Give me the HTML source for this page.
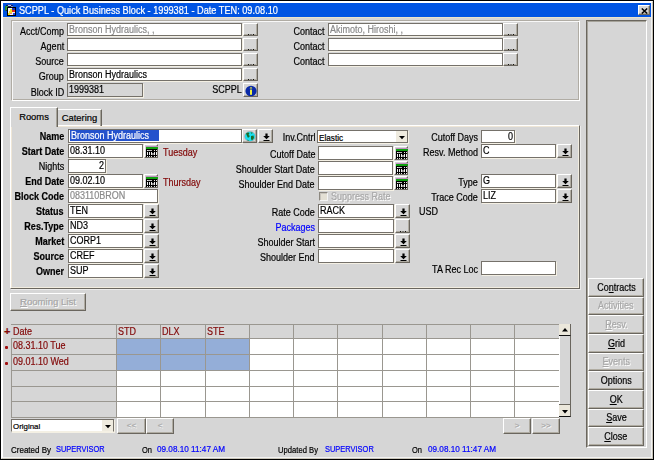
<!DOCTYPE html>
<html><head><meta charset="utf-8">
<style>
*{margin:0;padding:0;box-sizing:border-box}
html,body{width:654px;height:460px;overflow:hidden;background:#d6d6d6}
body{position:relative;font-family:"Liberation Sans",sans-serif;font-size:9px;color:#000;-webkit-text-stroke:0.2px}
.a{position:absolute}
.lbl{position:absolute;text-align:right;white-space:nowrap;line-height:13px;height:13px;padding-top:1px}
.lft{text-align:left}
.b{font-weight:bold}
.fld{position:absolute;background:#fff;border:1px solid #75716a;box-shadow:1px 1px 0 #f4f0e4;white-space:nowrap;overflow:hidden;line-height:12px;padding-left:1px;padding-top:0;font-size:9.3px}
.gr{color:#8a8a8a}
.btn{position:absolute;background:#d6d6d6;border-top:1px solid #fff;border-left:1px solid #fff;border-right:1px solid #6a665e;border-bottom:1px solid #6a665e;box-shadow:inset -1px -1px 0 #b0aca2}
.grp{position:absolute;border-top:1px solid #b0aca4;border-left:1px solid #b0aca4;border-right:1px solid #fff;border-bottom:1px solid #fff;box-shadow:inset 1px 1px 0 #f8f8f8, inset -1px -1px 0 #b0aca4}
.red{color:#820808}
.blue{color:#0000ff}
.tb{position:absolute;text-align:center;line-height:16px;white-space:nowrap}
.dis{color:#a8a8a8;text-shadow:1px 1px 0 #fff}
.sx{display:inline-block;transform-origin:0 0}
.t9{display:inline-block;font-size:10px;transform:scaleX(.9);transform-origin:100% 50%}
.lft .t9{transform-origin:0 50%}
.fld .t9{transform-origin:0 50%}
</style></head><body>
<div class="a" style="left:0;top:0;width:654px;height:460px;border:1px solid #000"></div>
<div class="a" style="left:1px;top:1px;width:652px;height:458px;border:1px solid #fff;border-right-color:#c8c4b8;border-bottom-color:#c8c4b8"></div>
<div class="a" style="left:2px;top:2px;width:650px;height:456px;border:1px solid #fff;border-right-color:#f2f2f2;border-bottom-color:#f2f2f2"></div>
<div class="a" style="left:3px;top:3px;width:648px;height:14px;background:#0054e3;color:#fff;font-size:10px;line-height:16px;padding-left:16px;white-space:nowrap;overflow:hidden"><span class="sx" style="transform:scaleX(0.917);transform-origin:0 50%">SCPPL - Quick Business Block - 1999381 - Date TEN: 09.08.10</span></div>
<div class="a" style="left:3px;top:17px;width:648px;height:1px;background:#ece4cc"></div>
<svg class="a" style="left:5px;top:4px" width="12" height="12" viewBox="0 0 12 12" shape-rendering="crispEdges">
<rect x="1" y="1" width="7" height="6" fill="#0c1c6c"/><rect x="2" y="0" width="5" height="1" fill="#3050b0"/><rect x="0" y="2" width="1" height="5" fill="#208030"/>
<rect x="1" y="2" width="2" height="4" fill="#30a040"/><rect x="3" y="1" width="3" height="1" fill="#c0d0f0"/><rect x="6" y="2" width="2" height="1" fill="#8090d0"/>
<rect x="2" y="3" width="9" height="9" fill="#000"/><rect x="3" y="4" width="7" height="7" fill="#f4f4f4"/>
<rect x="7" y="4" width="3" height="2" fill="#1830c0"/><rect x="7" y="6" width="3" height="2" fill="#e02828"/><rect x="8" y="9" width="2" height="2" fill="#2040e0"/>
<rect x="5" y="5" width="2" height="2" fill="#f0e020"/><rect x="4" y="7" width="3" height="2" fill="#f0e020"/><rect x="3" y="9" width="2" height="2" fill="#f0e020"/><rect x="5" y="9" width="2" height="1" fill="#e08080"/>
</svg>
<div class="btn " style="left:638px;top:5px;width:12px;height:10px;"><svg class="a" style="left:2px;top:1.5px" width="7" height="6" viewBox="0 0 7 6"><path d="M0.8 0.5L6.2 5.5M6.2 0.5L0.8 5.5" stroke="#000" stroke-width="1.5"/></svg></div>
<div class="grp" style="left:11px;top:20px;width:569px;height:81px"></div>
<div class="lbl " style="left:-56px;top:23px;width:120px;padding-top:1.5px"><span class="t9">Acct/Comp</span></div>
<div class="lbl " style="left:-56px;top:38px;width:120px;padding-top:1.5px"><span class="t9">Agent</span></div>
<div class="lbl " style="left:-56px;top:53px;width:120px;padding-top:1.5px"><span class="t9">Source</span></div>
<div class="lbl " style="left:-56px;top:68px;width:120px;padding-top:1.5px"><span class="t9">Group</span></div>
<div class="lbl " style="left:-56px;top:83px;width:120px;padding-top:2.5px"><span class="t9">Block ID</span></div>
<div class="fld gr" style="left:67px;top:23px;width:175px;height:13px;padding-top:0"><span class="t9">Bronson Hydraulics, ,</span></div>
<div class="fld " style="left:67px;top:38px;width:175px;height:13px;"></div>
<div class="fld " style="left:67px;top:53px;width:175px;height:13px;"></div>
<div class="fld " style="left:67px;top:68px;width:175px;height:13px;padding-top:0"><span class="t9">Bronson Hydraulics</span></div>
<div class="fld " style="left:67px;top:83px;width:76px;height:14px;background:#d6d6d6;padding-top:0"><span class="t9">1999381</span></div>
<div class="btn " style="left:243px;top:23px;width:15px;height:13px;"><svg class="a" style="left:3px;top:10px" width="8" height="2" shape-rendering="crispEdges"><rect x="1" y="0" width="1" height="1" fill="#111"/><rect x="3" y="0" width="2" height="1" fill="#777"/><rect x="6" y="0" width="1" height="1" fill="#111"/></svg></div>
<div class="btn " style="left:243px;top:38px;width:15px;height:13px;"><svg class="a" style="left:3px;top:10px" width="8" height="2" shape-rendering="crispEdges"><rect x="1" y="0" width="1" height="1" fill="#111"/><rect x="3" y="0" width="2" height="1" fill="#777"/><rect x="6" y="0" width="1" height="1" fill="#111"/></svg></div>
<div class="btn " style="left:243px;top:53px;width:15px;height:13px;"><svg class="a" style="left:3px;top:10px" width="8" height="2" shape-rendering="crispEdges"><rect x="1" y="0" width="1" height="1" fill="#111"/><rect x="3" y="0" width="2" height="1" fill="#777"/><rect x="6" y="0" width="1" height="1" fill="#111"/></svg></div>
<div class="btn " style="left:243px;top:68px;width:15px;height:13px;"><svg class="a" style="left:3px;top:10px" width="8" height="2" shape-rendering="crispEdges"><rect x="1" y="0" width="1" height="1" fill="#111"/><rect x="3" y="0" width="2" height="1" fill="#777"/><rect x="6" y="0" width="1" height="1" fill="#111"/></svg></div>
<div class="lbl " style="left:122px;top:82px;width:120px;padding-top:0.5px"><span class="t9">SCPPL</span></div>
<div class="btn " style="left:243px;top:83px;width:15px;height:14px;"><svg class="a" style="left:1px;top:1px" width="12" height="12" viewBox="0 0 12 12"><ellipse cx="6" cy="6" rx="5.6" ry="5.2" fill="#0a2aa8"/><rect x="5" y="4.6" width="2" height="5.2" fill="#f0f040"/><path d="M4.6 3.6 L6 1.8 L7.4 3.6Z" fill="#f0f040"/></svg></div>
<div class="lbl " style="left:204px;top:23px;width:120px;padding-top:1.5px"><span class="t9">Contact</span></div>
<div class="fld gr" style="left:328px;top:23px;width:175px;height:13px;padding-top:0"><span class="t9">Akimoto, Hiroshi, ,</span></div>
<div class="btn " style="left:503px;top:23px;width:15px;height:13px;"><svg class="a" style="left:3px;top:10px" width="8" height="2" shape-rendering="crispEdges"><rect x="1" y="0" width="1" height="1" fill="#111"/><rect x="3" y="0" width="2" height="1" fill="#777"/><rect x="6" y="0" width="1" height="1" fill="#111"/></svg></div>
<div class="lbl " style="left:204px;top:38px;width:120px;padding-top:1.5px"><span class="t9">Contact</span></div>
<div class="fld gr" style="left:328px;top:38px;width:175px;height:13px;padding-top:0"></div>
<div class="btn " style="left:503px;top:38px;width:15px;height:13px;"><svg class="a" style="left:3px;top:10px" width="8" height="2" shape-rendering="crispEdges"><rect x="1" y="0" width="1" height="1" fill="#111"/><rect x="3" y="0" width="2" height="1" fill="#777"/><rect x="6" y="0" width="1" height="1" fill="#111"/></svg></div>
<div class="lbl " style="left:204px;top:53px;width:120px;padding-top:1.5px"><span class="t9">Contact</span></div>
<div class="fld gr" style="left:328px;top:53px;width:175px;height:13px;padding-top:0"></div>
<div class="btn " style="left:503px;top:53px;width:15px;height:13px;"><svg class="a" style="left:3px;top:10px" width="8" height="2" shape-rendering="crispEdges"><rect x="1" y="0" width="1" height="1" fill="#111"/><rect x="3" y="0" width="2" height="1" fill="#777"/><rect x="6" y="0" width="1" height="1" fill="#111"/></svg></div>
<div class="a" style="left:10px;top:125px;width:570px;height:164px;border-top:1px solid #fff;border-left:1px solid #fff;border-right:1px solid #6a665e;border-bottom:1px solid #6a665e;box-shadow:inset -1px -1px 0 #f2ede0, inset 1px 1px 0 #efe6d6, 1px 1px 0 #ececec"></div>
<div class="a tb" style="left:57px;top:109px;width:45px;height:17px;border-top:1px solid #fff;border-left:1px solid #fff;border-right:1px solid #6a665e;box-shadow:inset -1px 0 0 #a6a39a;padding-top:0;font-size:9.4px">Catering</div>
<div class="a tb" style="left:10px;top:107px;width:48px;height:20px;background:#d6d6d6;border-top:1px solid #fff;border-left:1px solid #fff;border-right:1px solid #6a665e;box-shadow:inset -1px 0 0 #a6a39a;padding-top:1px;font-size:9.4px">Rooms</div>
<div class="lbl b" style="left:-56px;top:129px;width:120px;"><span class="t9">Name</span></div>
<div class="fld " style="left:68px;top:129px;width:174px;height:14px;padding-top:0"><span style="display:inline-block;background:#2452cc;color:#fff;padding:0 1px;height:11px;line-height:11px;vertical-align:top"><span class="t9">Bronson Hydraulics</span></span></div>
<div class="btn " style="left:242px;top:129px;width:15px;height:14px;"><svg class="a" style="left:1px;top:1px" width="12" height="11" viewBox="0 0 12 11"><ellipse cx="6" cy="5.5" rx="5.4" ry="5" fill="#18e0f0" stroke="#c89090" stroke-width="0.5"/><path d="M2 2.5 Q4 1 5.5 2 L4.5 4 L6 5 L4 7 L3 5 Z M6.5 1.5 L8.5 1.5 L8 3 Z M7 5 L9.5 4.5 L10 7 L8 9.5 L7 8 Z M3 8.5 L5 9.5 L4 10 Z" fill="#1a6a28"/></svg></div>
<div class="btn " style="left:258px;top:129px;width:15px;height:14px;"><svg class="a" style="left:4px;top:3px" width="7" height="8" viewBox="0 0 7 8"><path d="M2.4 0.5h2.2v2.5h2.2l-3.3 3.2-3.3-3.2h2.2z" fill="#000"/><rect x="0.5" y="7" width="6" height="1" fill="#000"/></svg></div>
<div class="lbl b" style="left:-56px;top:144px;width:120px;"><span class="t9">Start Date</span></div>
<div class="lbl " style="left:-56px;top:159px;width:120px;"><span class="t9">Nights</span></div>
<div class="lbl b" style="left:-56px;top:174px;width:120px;"><span class="t9">End Date</span></div>
<div class="lbl b" style="left:-56px;top:189px;width:120px;"><span class="t9">Block Code</span></div>
<div class="lbl b" style="left:-56px;top:204px;width:120px;"><span class="t9">Status</span></div>
<div class="lbl b" style="left:-56px;top:219px;width:120px;"><span class="t9">Res.Type</span></div>
<div class="lbl b" style="left:-56px;top:234px;width:120px;"><span class="t9">Market</span></div>
<div class="lbl b" style="left:-56px;top:249px;width:120px;"><span class="t9">Source</span></div>
<div class="lbl b" style="left:-56px;top:264px;width:120px;"><span class="t9">Owner</span></div>
<div class="fld " style="left:68px;top:144px;width:75px;height:14px;"><span class="t9">08.31.10</span></div>
<div class="btn " style="left:144px;top:144px;width:14px;height:14px;"><svg class="a" style="left:0px;top:1px" width="13" height="12" viewBox="0 0 13 12" shape-rendering="crispEdges"><rect x="1" y="0" width="12" height="1" fill="#c090c0"/><rect x="1" y="1" width="12" height="2" fill="#10a010"/><rect x="1" y="3" width="11" height="8" fill="#000"/><rect x="2" y="4" width="1" height="1" fill="#e8e8e8"/><rect x="2" y="6" width="1" height="3" fill="#f0f0f0"/><rect x="2" y="10" width="1" height="1" fill="#e8e8e8"/><rect x="4" y="4" width="1" height="1" fill="#e8e8e8"/><rect x="4" y="6" width="1" height="3" fill="#f0f0f0"/><rect x="4" y="10" width="1" height="1" fill="#e8e8e8"/><rect x="6" y="4" width="1" height="1" fill="#e8e8e8"/><rect x="6" y="6" width="1" height="3" fill="#f0f0f0"/><rect x="6" y="10" width="1" height="1" fill="#e8e8e8"/><rect x="9" y="4" width="1" height="1" fill="#e8e8e8"/><rect x="9" y="6" width="1" height="3" fill="#f0f0f0"/><rect x="9" y="10" width="1" height="1" fill="#e8e8e8"/><rect x="11" y="4" width="1" height="1" fill="#e8e8e8"/><rect x="11" y="6" width="1" height="3" fill="#f0f0f0"/><rect x="11" y="10" width="1" height="1" fill="#e8e8e8"/><rect x="3" y="4" width="4" height="1" fill="#bbb"/><rect x="7" y="7" width="2" height="2" fill="#888"/></svg></div>
<div class="lbl red lft" style="left:163px;top:145px"><span class="t9">Tuesday</span></div>
<div class="fld " style="left:68px;top:159px;width:38px;height:14px;text-align:right;padding-right:0"><span class="t9">2</span></div>
<div class="fld " style="left:68px;top:174px;width:75px;height:14px;"><span class="t9">09.02.10</span></div>
<div class="btn " style="left:144px;top:174px;width:14px;height:14px;"><svg class="a" style="left:0px;top:1px" width="13" height="12" viewBox="0 0 13 12" shape-rendering="crispEdges"><rect x="1" y="0" width="12" height="1" fill="#c090c0"/><rect x="1" y="1" width="12" height="2" fill="#10a010"/><rect x="1" y="3" width="11" height="8" fill="#000"/><rect x="2" y="4" width="1" height="1" fill="#e8e8e8"/><rect x="2" y="6" width="1" height="3" fill="#f0f0f0"/><rect x="2" y="10" width="1" height="1" fill="#e8e8e8"/><rect x="4" y="4" width="1" height="1" fill="#e8e8e8"/><rect x="4" y="6" width="1" height="3" fill="#f0f0f0"/><rect x="4" y="10" width="1" height="1" fill="#e8e8e8"/><rect x="6" y="4" width="1" height="1" fill="#e8e8e8"/><rect x="6" y="6" width="1" height="3" fill="#f0f0f0"/><rect x="6" y="10" width="1" height="1" fill="#e8e8e8"/><rect x="9" y="4" width="1" height="1" fill="#e8e8e8"/><rect x="9" y="6" width="1" height="3" fill="#f0f0f0"/><rect x="9" y="10" width="1" height="1" fill="#e8e8e8"/><rect x="11" y="4" width="1" height="1" fill="#e8e8e8"/><rect x="11" y="6" width="1" height="3" fill="#f0f0f0"/><rect x="11" y="10" width="1" height="1" fill="#e8e8e8"/><rect x="3" y="4" width="4" height="1" fill="#bbb"/><rect x="7" y="7" width="2" height="2" fill="#888"/></svg></div>
<div class="lbl red lft" style="left:163px;top:175px"><span class="t9">Thursday</span></div>
<div class="fld gr" style="left:68px;top:189px;width:90px;height:14px;"><span class="t9">083110BRON</span></div>
<div class="fld " style="left:68px;top:204px;width:75px;height:14px;"><span class="t9">TEN</span></div>
<div class="btn " style="left:144px;top:204px;width:15px;height:14px;"><svg class="a" style="left:4px;top:3px" width="7" height="8" viewBox="0 0 7 8"><path d="M2.4 0.5h2.2v2.5h2.2l-3.3 3.2-3.3-3.2h2.2z" fill="#000"/><rect x="0.5" y="7" width="6" height="1" fill="#000"/></svg></div>
<div class="fld " style="left:68px;top:219px;width:75px;height:14px;"><span class="t9">ND3</span></div>
<div class="btn " style="left:144px;top:219px;width:15px;height:14px;"><svg class="a" style="left:4px;top:3px" width="7" height="8" viewBox="0 0 7 8"><path d="M2.4 0.5h2.2v2.5h2.2l-3.3 3.2-3.3-3.2h2.2z" fill="#000"/><rect x="0.5" y="7" width="6" height="1" fill="#000"/></svg></div>
<div class="fld " style="left:68px;top:234px;width:75px;height:14px;"><span class="t9">CORP1</span></div>
<div class="btn " style="left:144px;top:234px;width:15px;height:14px;"><svg class="a" style="left:4px;top:3px" width="7" height="8" viewBox="0 0 7 8"><path d="M2.4 0.5h2.2v2.5h2.2l-3.3 3.2-3.3-3.2h2.2z" fill="#000"/><rect x="0.5" y="7" width="6" height="1" fill="#000"/></svg></div>
<div class="fld " style="left:68px;top:249px;width:75px;height:14px;"><span class="t9">CREF</span></div>
<div class="btn " style="left:144px;top:249px;width:15px;height:14px;"><svg class="a" style="left:4px;top:3px" width="7" height="8" viewBox="0 0 7 8"><path d="M2.4 0.5h2.2v2.5h2.2l-3.3 3.2-3.3-3.2h2.2z" fill="#000"/><rect x="0.5" y="7" width="6" height="1" fill="#000"/></svg></div>
<div class="fld " style="left:68px;top:264px;width:75px;height:14px;"><span class="t9">SUP</span></div>
<div class="btn " style="left:144px;top:264px;width:15px;height:14px;"><svg class="a" style="left:4px;top:3px" width="7" height="8" viewBox="0 0 7 8"><path d="M2.4 0.5h2.2v2.5h2.2l-3.3 3.2-3.3-3.2h2.2z" fill="#000"/><rect x="0.5" y="7" width="6" height="1" fill="#000"/></svg></div>
<div class="lbl " style="left:195px;top:130px;width:120px;padding-top:0.5px"><span class="t9">Inv.Cntrl</span></div>
<div class="fld" style="left:317px;top:130px;width:91px;height:13px;font-size:8.2px;padding-top:2px;line-height:11px">Elastic<div class="a" style="right:0;top:0;width:11px;height:11px;background:#efebdf"><svg class="a" style="left:3px;top:5px" width="6" height="4"><path d="M0 0h6l-3 3.2z" fill="#000"/></svg></div></div>
<div class="lbl " style="left:195px;top:147px;width:120px;"><span class="t9">Cutoff Date</span></div>
<div class="fld " style="left:318px;top:146px;width:75px;height:14px;"></div>
<div class="btn " style="left:394px;top:146px;width:14px;height:14px;"><svg class="a" style="left:0px;top:1px" width="13" height="12" viewBox="0 0 13 12" shape-rendering="crispEdges"><rect x="1" y="0" width="12" height="1" fill="#c090c0"/><rect x="1" y="1" width="12" height="2" fill="#10a010"/><rect x="1" y="3" width="11" height="8" fill="#000"/><rect x="2" y="4" width="1" height="1" fill="#e8e8e8"/><rect x="2" y="6" width="1" height="3" fill="#f0f0f0"/><rect x="2" y="10" width="1" height="1" fill="#e8e8e8"/><rect x="4" y="4" width="1" height="1" fill="#e8e8e8"/><rect x="4" y="6" width="1" height="3" fill="#f0f0f0"/><rect x="4" y="10" width="1" height="1" fill="#e8e8e8"/><rect x="6" y="4" width="1" height="1" fill="#e8e8e8"/><rect x="6" y="6" width="1" height="3" fill="#f0f0f0"/><rect x="6" y="10" width="1" height="1" fill="#e8e8e8"/><rect x="9" y="4" width="1" height="1" fill="#e8e8e8"/><rect x="9" y="6" width="1" height="3" fill="#f0f0f0"/><rect x="9" y="10" width="1" height="1" fill="#e8e8e8"/><rect x="11" y="4" width="1" height="1" fill="#e8e8e8"/><rect x="11" y="6" width="1" height="3" fill="#f0f0f0"/><rect x="11" y="10" width="1" height="1" fill="#e8e8e8"/><rect x="3" y="4" width="4" height="1" fill="#bbb"/><rect x="7" y="7" width="2" height="2" fill="#888"/></svg></div>
<div class="lbl " style="left:195px;top:162px;width:120px;"><span class="t9">Shoulder Start Date</span></div>
<div class="fld " style="left:318px;top:161px;width:75px;height:14px;"></div>
<div class="btn " style="left:394px;top:161px;width:14px;height:14px;"><svg class="a" style="left:0px;top:1px" width="13" height="12" viewBox="0 0 13 12" shape-rendering="crispEdges"><rect x="1" y="0" width="12" height="1" fill="#c090c0"/><rect x="1" y="1" width="12" height="2" fill="#10a010"/><rect x="1" y="3" width="11" height="8" fill="#000"/><rect x="2" y="4" width="1" height="1" fill="#e8e8e8"/><rect x="2" y="6" width="1" height="3" fill="#f0f0f0"/><rect x="2" y="10" width="1" height="1" fill="#e8e8e8"/><rect x="4" y="4" width="1" height="1" fill="#e8e8e8"/><rect x="4" y="6" width="1" height="3" fill="#f0f0f0"/><rect x="4" y="10" width="1" height="1" fill="#e8e8e8"/><rect x="6" y="4" width="1" height="1" fill="#e8e8e8"/><rect x="6" y="6" width="1" height="3" fill="#f0f0f0"/><rect x="6" y="10" width="1" height="1" fill="#e8e8e8"/><rect x="9" y="4" width="1" height="1" fill="#e8e8e8"/><rect x="9" y="6" width="1" height="3" fill="#f0f0f0"/><rect x="9" y="10" width="1" height="1" fill="#e8e8e8"/><rect x="11" y="4" width="1" height="1" fill="#e8e8e8"/><rect x="11" y="6" width="1" height="3" fill="#f0f0f0"/><rect x="11" y="10" width="1" height="1" fill="#e8e8e8"/><rect x="3" y="4" width="4" height="1" fill="#bbb"/><rect x="7" y="7" width="2" height="2" fill="#888"/></svg></div>
<div class="lbl " style="left:195px;top:177px;width:120px;"><span class="t9">Shoulder End Date</span></div>
<div class="fld " style="left:318px;top:176px;width:75px;height:14px;"></div>
<div class="btn " style="left:394px;top:176px;width:14px;height:14px;"><svg class="a" style="left:0px;top:1px" width="13" height="12" viewBox="0 0 13 12" shape-rendering="crispEdges"><rect x="1" y="0" width="12" height="1" fill="#c090c0"/><rect x="1" y="1" width="12" height="2" fill="#10a010"/><rect x="1" y="3" width="11" height="8" fill="#000"/><rect x="2" y="4" width="1" height="1" fill="#e8e8e8"/><rect x="2" y="6" width="1" height="3" fill="#f0f0f0"/><rect x="2" y="10" width="1" height="1" fill="#e8e8e8"/><rect x="4" y="4" width="1" height="1" fill="#e8e8e8"/><rect x="4" y="6" width="1" height="3" fill="#f0f0f0"/><rect x="4" y="10" width="1" height="1" fill="#e8e8e8"/><rect x="6" y="4" width="1" height="1" fill="#e8e8e8"/><rect x="6" y="6" width="1" height="3" fill="#f0f0f0"/><rect x="6" y="10" width="1" height="1" fill="#e8e8e8"/><rect x="9" y="4" width="1" height="1" fill="#e8e8e8"/><rect x="9" y="6" width="1" height="3" fill="#f0f0f0"/><rect x="9" y="10" width="1" height="1" fill="#e8e8e8"/><rect x="11" y="4" width="1" height="1" fill="#e8e8e8"/><rect x="11" y="6" width="1" height="3" fill="#f0f0f0"/><rect x="11" y="10" width="1" height="1" fill="#e8e8e8"/><rect x="3" y="4" width="4" height="1" fill="#bbb"/><rect x="7" y="7" width="2" height="2" fill="#888"/></svg></div>
<div class="a" style="left:319px;top:192px;width:9px;height:9px;background:#e4e0d4;border:1px solid #8c8880;border-right-color:#f4f4f4;border-bottom-color:#f4f4f4;box-shadow:inset 1px 1px 0 #c8c4bc"></div>
<div class="lbl lft dis" style="left:331px;top:189px"><span class="t9">Suppress Rate</span></div>
<div class="lbl " style="left:195px;top:205px;width:120px;"><span class="t9">Rate Code</span></div>
<div class="fld " style="left:318px;top:204px;width:76px;height:14px;"><span class="t9">RACK</span></div>
<div class="btn " style="left:395px;top:204px;width:15px;height:14px;"><svg class="a" style="left:4px;top:3px" width="7" height="8" viewBox="0 0 7 8"><path d="M2.4 0.5h2.2v2.5h2.2l-3.3 3.2-3.3-3.2h2.2z" fill="#000"/><rect x="0.5" y="7" width="6" height="1" fill="#000"/></svg></div>
<div class="lbl lft" style="left:419px;top:204px"><span class="t9">USD</span></div>
<div class="lbl blue" style="left:195px;top:220px;width:120px;"><span class="t9">Packages</span></div>
<div class="fld " style="left:318px;top:219px;width:76px;height:14px;"></div>
<div class="btn " style="left:395px;top:219px;width:15px;height:14px;"><svg class="a" style="left:3px;top:11px" width="8" height="2" shape-rendering="crispEdges"><rect x="1" y="0" width="1" height="1" fill="#111"/><rect x="3" y="0" width="2" height="1" fill="#777"/><rect x="6" y="0" width="1" height="1" fill="#111"/></svg></div>
<div class="lbl " style="left:195px;top:235px;width:120px;"><span class="t9">Shoulder Start</span></div>
<div class="fld " style="left:318px;top:234px;width:76px;height:14px;"></div>
<div class="btn " style="left:395px;top:234px;width:15px;height:14px;"><svg class="a" style="left:4px;top:3px" width="7" height="8" viewBox="0 0 7 8"><path d="M2.4 0.5h2.2v2.5h2.2l-3.3 3.2-3.3-3.2h2.2z" fill="#000"/><rect x="0.5" y="7" width="6" height="1" fill="#000"/></svg></div>
<div class="lbl " style="left:195px;top:250px;width:120px;"><span class="t9">Shoulder End</span></div>
<div class="fld " style="left:318px;top:249px;width:76px;height:14px;"></div>
<div class="btn " style="left:395px;top:249px;width:15px;height:14px;"><svg class="a" style="left:4px;top:3px" width="7" height="8" viewBox="0 0 7 8"><path d="M2.4 0.5h2.2v2.5h2.2l-3.3 3.2-3.3-3.2h2.2z" fill="#000"/><rect x="0.5" y="7" width="6" height="1" fill="#000"/></svg></div>
<div class="lbl " style="left:358px;top:130px;width:120px;"><span class="t9">Cutoff Days</span></div>
<div class="fld " style="left:481px;top:130px;width:34px;height:13px;text-align:right;padding-right:0"><span class="t9">0</span></div>
<div class="lbl " style="left:358px;top:145px;width:120px;"><span class="t9">Resv. Method</span></div>
<div class="fld " style="left:481px;top:144px;width:75px;height:14px;"><span class="t9">C</span></div>
<div class="btn " style="left:557px;top:144px;width:15px;height:14px;"><svg class="a" style="left:4px;top:3px" width="7" height="8" viewBox="0 0 7 8"><path d="M2.4 0.5h2.2v2.5h2.2l-3.3 3.2-3.3-3.2h2.2z" fill="#000"/><rect x="0.5" y="7" width="6" height="1" fill="#000"/></svg></div>
<div class="lbl " style="left:358px;top:175px;width:120px;"><span class="t9">Type</span></div>
<div class="fld " style="left:481px;top:174px;width:75px;height:14px;"><span class="t9">G</span></div>
<div class="btn " style="left:557px;top:174px;width:15px;height:14px;"><svg class="a" style="left:4px;top:3px" width="7" height="8" viewBox="0 0 7 8"><path d="M2.4 0.5h2.2v2.5h2.2l-3.3 3.2-3.3-3.2h2.2z" fill="#000"/><rect x="0.5" y="7" width="6" height="1" fill="#000"/></svg></div>
<div class="lbl " style="left:358px;top:190px;width:120px;"><span class="t9">Trace Code</span></div>
<div class="fld " style="left:481px;top:189px;width:75px;height:14px;"><span class="t9">LIZ</span></div>
<div class="btn " style="left:557px;top:189px;width:15px;height:14px;"><svg class="a" style="left:4px;top:3px" width="7" height="8" viewBox="0 0 7 8"><path d="M2.4 0.5h2.2v2.5h2.2l-3.3 3.2-3.3-3.2h2.2z" fill="#000"/><rect x="0.5" y="7" width="6" height="1" fill="#000"/></svg></div>
<div class="lbl " style="left:358px;top:262px;width:120px;"><span class="t9">TA Rec Loc</span></div>
<div class="fld " style="left:481px;top:261px;width:75px;height:14px;"></div>
<div class="btn " style="left:10px;top:293px;width:76px;height:18px;"><div class="tb dis" style="left:0;top:0;width:74px;line-height:15px;font-size:9.6px"><u>R</u>ooming List</div></div>
<svg class="a" style="left:0;top:0" width="654" height="460" shape-rendering="crispEdges"><rect x="116" y="338" width="443" height="79" fill="#fff"/><rect x="116" y="338" width="44" height="16" fill="#94aed8"/><rect x="160" y="338" width="45" height="16" fill="#94aed8"/><rect x="205" y="338" width="44" height="16" fill="#94aed8"/><rect x="116" y="354" width="44" height="16" fill="#94aed8"/><rect x="160" y="354" width="45" height="16" fill="#94aed8"/><rect x="205" y="354" width="44" height="16" fill="#94aed8"/><rect x="11" y="324" width="548" height="1" fill="#9a9790"/><rect x="11" y="338" width="548" height="1" fill="#9a9790"/><rect x="11" y="354" width="548" height="1" fill="#9a9790"/><rect x="11" y="370" width="548" height="1" fill="#9a9790"/><rect x="11" y="386" width="548" height="1" fill="#9a9790"/><rect x="11" y="401" width="548" height="1" fill="#9a9790"/><rect x="11" y="417" width="548" height="1" fill="#9a9790"/><rect x="11" y="338" width="1" height="79" fill="#9a9790"/><rect x="116" y="324" width="1" height="93" fill="#9a9790"/><rect x="160" y="324" width="1" height="93" fill="#9a9790"/><rect x="205" y="324" width="1" height="93" fill="#9a9790"/><rect x="249" y="324" width="1" height="93" fill="#9a9790"/><rect x="293" y="324" width="1" height="93" fill="#9a9790"/><rect x="337" y="324" width="1" height="93" fill="#9a9790"/><rect x="382" y="324" width="1" height="93" fill="#9a9790"/><rect x="426" y="324" width="1" height="93" fill="#9a9790"/><rect x="470" y="324" width="1" height="93" fill="#9a9790"/><rect x="514" y="324" width="1" height="93" fill="#9a9790"/><rect x="559" y="324" width="1" height="93" fill="#9a9790"/></svg>
<div class="a red" style="left:4px;top:326px;font-weight:bold;font-size:11px;line-height:11px">+</div>
<div class="lbl lft red" style="left:13px;top:324px"><span class="t9">Date</span></div>
<div class="lbl lft red" style="left:118px;top:324px"><span class="t9">STD</span></div>
<div class="lbl lft red" style="left:162px;top:324px"><span class="t9">DLX</span></div>
<div class="lbl lft red" style="left:207px;top:324px"><span class="t9">STE</span></div>
<div class="lbl lft red" style="left:13px;top:338px"><span class="t9">08.31.10 Tue</span></div>
<div class="lbl lft red" style="left:13px;top:354px"><span class="t9">09.01.10 Wed</span></div>
<div class="a" style="left:5px;top:346px;width:3px;height:3px;background:#a01010;border-radius:1px"></div>
<div class="a" style="left:5px;top:362px;width:3px;height:3px;background:#a01010;border-radius:1px"></div>
<div class="a" style="left:559px;top:324px;width:12px;height:93px;background:#d6d6d6;border-left:1px solid #fff;border-right:1px solid #6a665e"></div>
<div class="a" style="left:559px;top:324px;width:12px;height:12px;background:#ebe7db;border-right:1px solid #6a665e;border-bottom:1px solid #111"><svg class="a" style="left:3px;top:4px" width="6" height="4"><path d="M0 3.5h6l-3-3.5z" fill="#000"/></svg></div>
<div class="a" style="left:559px;top:404px;width:12px;height:13px;background:#ebe7db;border-top:1px solid #6a665e;border-right:1px solid #6a665e;border-bottom:1px solid #111"><svg class="a" style="left:3px;top:5px" width="6" height="4"><path d="M0 0h6l-3 3.5z" fill="#000"/></svg></div>
<div class="fld" style="left:11px;top:419px;width:103px;height:13px;font-size:7.9px;padding-top:2px;line-height:10px;border-bottom-color:#f4f0e4">Original<div class="a" style="right:0;top:0;width:11px;height:11px;background:#efebdf"><svg class="a" style="left:3px;top:5px" width="6" height="4"><path d="M0 0h6l-3 3.2z" fill="#000"/></svg></div></div>
<div class="btn " style="left:117px;top:418px;width:29px;height:16px;"><div class="tb dis" style="left:0;top:0;width:27px;line-height:13px;font-size:8px">&lt;&lt;</div></div>
<div class="btn " style="left:146px;top:418px;width:28px;height:16px;"><div class="tb dis" style="left:0;top:0;width:26px;line-height:13px;font-size:8px">&lt;</div></div>
<div class="btn " style="left:503px;top:418px;width:28px;height:16px;"><div class="tb dis" style="left:0;top:0;width:26px;line-height:13px;font-size:8px">&gt;</div></div>
<div class="btn " style="left:532px;top:418px;width:28px;height:16px;"><div class="tb dis" style="left:0;top:0;width:26px;line-height:13px;font-size:8px">&gt;&gt;</div></div>
<div class="a " style="left:11px;top:445px;font-size:8.8px;line-height:10px;white-space:nowrap"><span class="sx" style="transform:scaleX(0.909)">Created By</span></div>
<div class="a blue" style="left:56px;top:444px;font-size:8.8px;line-height:10px;white-space:nowrap"><span class="sx" style="transform:scaleX(0.845)">SUPERVISOR</span></div>
<div class="a " style="left:142px;top:445px;font-size:8.8px;line-height:10px;white-space:nowrap"><span class="sx" style="transform:scaleX(0.851)">On</span></div>
<div class="a blue" style="left:157px;top:444px;font-size:8.8px;line-height:10px;white-space:nowrap"><span class="sx" style="transform:scaleX(0.929)">09.08.10 11:47 AM</span></div>
<div class="a " style="left:278px;top:445px;font-size:8.8px;line-height:10px;white-space:nowrap"><span class="sx" style="transform:scaleX(0.870)">Updated By</span></div>
<div class="a blue" style="left:325px;top:444px;font-size:8.8px;line-height:10px;white-space:nowrap"><span class="sx" style="transform:scaleX(0.848)">SUPERVISOR</span></div>
<div class="a " style="left:412px;top:445px;font-size:8.8px;line-height:10px;white-space:nowrap"><span class="sx" style="transform:scaleX(0.851)">On</span></div>
<div class="a blue" style="left:428px;top:444px;font-size:8.8px;line-height:10px;white-space:nowrap"><span class="sx" style="transform:scaleX(0.929)">09.08.10 11:47 AM</span></div>
<div class="a" style="left:586px;top:20px;width:61px;height:428px;border-top:1px solid #6a665e;border-left:1px solid #6a665e;border-right:1px solid #fff;border-bottom:1px solid #fff;box-shadow:inset 1px 1px 0 #a6a39a"></div>
<div class="btn " style="left:588px;top:278px;width:56px;height:19px;"><div class="tb " style="left:0;top:0;width:54px;line-height:17px"><span class="t9" style="transform-origin:50% 50%">Co<u>n</u>tracts</span></div></div>
<div class="btn " style="left:588px;top:297px;width:56px;height:18px;"><div class="tb dis" style="left:0;top:0;width:54px;line-height:16px"><span class="t9" style="transform-origin:50% 50%">Activities</span></div></div>
<div class="btn " style="left:588px;top:315px;width:56px;height:19px;"><div class="tb dis" style="left:0;top:0;width:54px;line-height:17px"><span class="t9" style="transform-origin:50% 50%"><u>R</u>esv.</span></div></div>
<div class="btn " style="left:588px;top:334px;width:56px;height:19px;"><div class="tb " style="left:0;top:0;width:54px;line-height:17px"><span class="t9" style="transform-origin:50% 50%"><u>G</u>rid</span></div></div>
<div class="btn " style="left:588px;top:353px;width:56px;height:18px;"><div class="tb dis" style="left:0;top:0;width:54px;line-height:16px"><span class="t9" style="transform-origin:50% 50%"><u>E</u>vents</span></div></div>
<div class="btn " style="left:588px;top:371px;width:56px;height:19px;"><div class="tb " style="left:0;top:0;width:54px;line-height:17px"><span class="t9" style="transform-origin:50% 50%">Options</span></div></div>
<div class="btn " style="left:588px;top:390px;width:56px;height:19px;"><div class="tb " style="left:0;top:0;width:54px;line-height:17px"><span class="t9" style="transform-origin:50% 50%"><u>O</u>K</span></div></div>
<div class="btn " style="left:588px;top:409px;width:56px;height:18px;"><div class="tb " style="left:0;top:0;width:54px;line-height:16px"><span class="t9" style="transform-origin:50% 50%"><u>S</u>ave</span></div></div>
<div class="btn " style="left:588px;top:427px;width:56px;height:19px;"><div class="tb " style="left:0;top:0;width:54px;line-height:17px"><span class="t9" style="transform-origin:50% 50%"><u>C</u>lose</span></div></div>
</body></html>
